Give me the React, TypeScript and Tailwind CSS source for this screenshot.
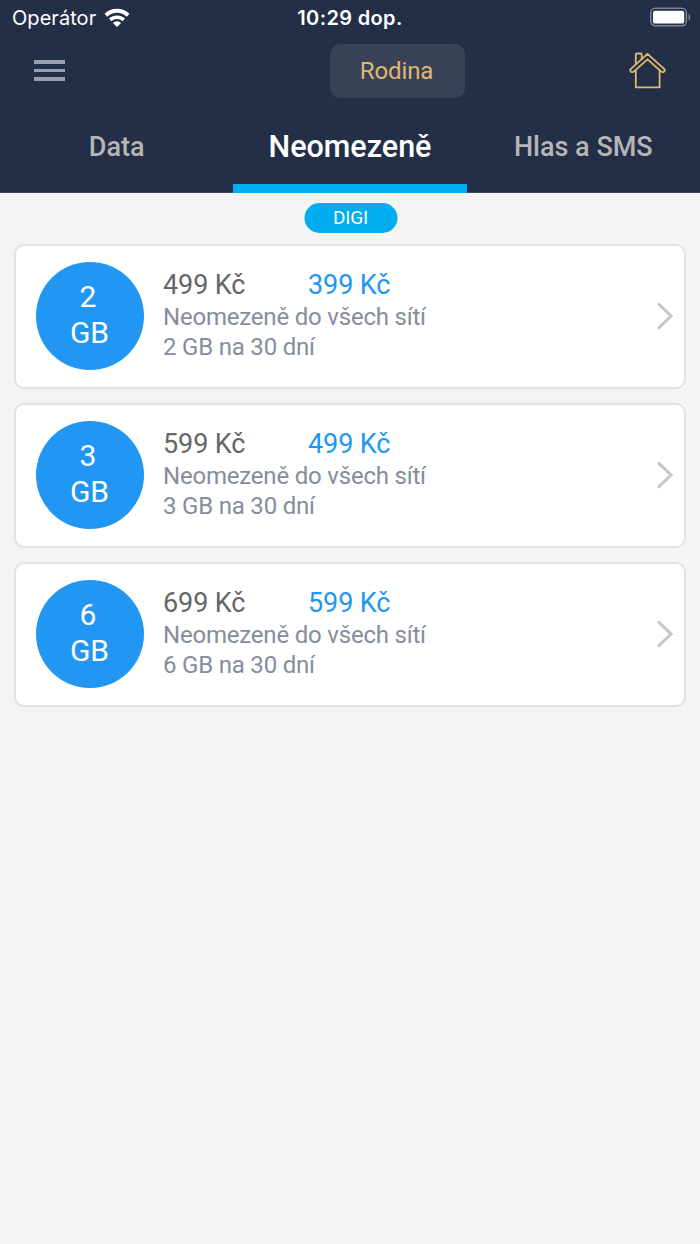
const plans = [
  { size: '2', oldPrice: '499 Kč', price: '399 Kč' },
  { size: '3', oldPrice: '599 Kč', price: '499 Kč' },
  { size: '6', oldPrice: '699 Kč', price: '599 Kč' },
];

function WifiIcon() {
  return (
    <svg className="ml-[8px] h-[20px] w-[26px] -translate-y-px" viewBox="0 0 26 20" fill="none" stroke="#fff" strokeWidth="4">
      <path d="M1.9 8.2a16.2 16.2 0 0 1 22.2 0" />
      <path d="M6.2 12.9a10 10 0 0 1 13.6 0" strokeWidth="3.5" />
      <path d="M13 20l-4.1-4a5.8 5.8 0 0 1 8.2 0z" fill="#fff" stroke="none" />
    </svg>
  );
}

function StatusBar() {
  return (
    <div className="grid h-9 grid-cols-3 items-center font-['Inter',sans-serif] text-[20px] leading-9 text-white">
      <div className="flex items-center pl-3">
        <span className="tracking-[0.05px]">Operátor</span>
        <WifiIcon />
      </div>
      <div className="text-center font-semibold tracking-[0.35px]">10:29 dop.</div>
      <div className="flex justify-end pr-2">
        <svg className="h-5 w-[42px] -translate-y-px" viewBox="0 0 42 20" fill="none">
          <rect x="0.8" y="1.2" width="35.6" height="17.6" rx="4.5" stroke="#7c8493" strokeWidth="1.5" />
          <rect x="3" y="3.8" width="31.2" height="12.8" rx="2.2" fill="#fff" />
          <path d="M38.5 7v6.4c2.4-.8 2.4-5.6 0-6.4z" fill="#7c8493" />
        </svg>
      </div>
    </div>
  );
}

function HouseIcon() {
  return (
    <svg className="h-[38px] w-[38px]" viewBox="0 0 38 38" fill="none" stroke="#e0b86f" strokeWidth="1.8" strokeLinejoin="round" strokeLinecap="round">
      <path d="M19.5 2.8 36.1 17.8q1.5 1.7-.2 2.9-1.5 1-2.9-.3L19.5 8.3 6 20.4q-1.4 1.3-2.9.3-1.7-1.2-.2-2.9z" />
      <path d="M7.8 13.2V3.7q0-1.2 1.2-1.2h3.5q1.2 0 1.2 1.2V8" />
      <path d="M7.8 19.5v16.8h23.8V19.5" />
    </svg>
  );
}

function PlanCard({ plan }: { plan: (typeof plans)[number] }) {
  return (
    <li className="flex h-[145px] items-center rounded-[10px] border-2 border-[#e2e2e3] bg-white pb-[2px] pl-5 pr-[11px]">
      <div className="flex size-[108px] shrink-0 flex-col items-center justify-center rounded-full bg-[#2196f3] pb-[2px] text-[30px] leading-9 text-white">
        <span className="pr-1">{plan.size}</span>
        <span className="pr-px">GB</span>
      </div>
      <div className="ml-[19px] grow pb-px text-[24px] leading-[30px] tracking-[-0.2px] text-[#858d9d]">
        <div className="flex h-[33px] text-[27px] leading-[32px] tracking-[-0.1px]">
          <span className="w-[145px] text-[#666]">{plan.oldPrice}</span>
          <span className="text-[#2196f3]">{plan.price}</span>
        </div>
        <p>Neomezeně do všech sítí</p>
        <p>{plan.size} GB na 30 dní</p>
      </div>
      <svg className="h-7 w-4" viewBox="0 0 16 28" fill="none" stroke="#c7c7c7" strokeWidth="3">
        <path d="M2 2.4 14 14 2 25.6" strokeLinecap="round" />
      </svg>
    </li>
  );
}

export default function App() {
  return (
    <div className="min-h-[1244px] w-full bg-[#f4f4f4] font-['Roboto',sans-serif]">
      <header className="h-[193px] bg-[#222f46]">
        <StatusBar />
        <div className="flex h-[70px] items-center pl-[34px] pr-[34px]">
          <button aria-label="Menu" className="flex w-[31px] flex-col gap-[5px] pb-px">
            <span className="h-[4px] bg-[#9a9fad]" />
            <span className="h-[3px] bg-[#9a9fad]" />
            <span className="h-[4px] bg-[#9a9fad]" />
          </button>
          <button className="ml-[265px] h-[54px] w-[135px] rounded-[10px] bg-[#374158] pr-[2px] text-[24px] tracking-[-0.1px] text-[#e0b86f]">Rodina</button>
          <button aria-label="Domů" className="ml-auto pb-[2px]">
            <HouseIcon />
          </button>
        </div>
        <nav className="grid h-[87px] grid-cols-3 border-b border-[#3b465b] text-center text-[27px] font-medium leading-[82px] text-[#b6b6b6]">
          <a>Data</a>
          <a className="h-[87px] border-b-[9px] border-[#00aeef] text-[30.5px] text-white">Neomezeně</a>
          <a>Hlas a SMS</a>
        </nav>
      </header>
      <main className="px-3.5 pt-2.5">
        <div className="mx-auto h-[30px] w-[93px] translate-x-[0.5px] rounded-full bg-[#00aeef] text-center text-[19px] leading-[29px] tracking-[-0.2px] text-white">DIGI</div>
        <ul className="mt-[11px] flex flex-col gap-3.5">
          {plans.map((plan) => (
            <PlanCard key={plan.size} plan={plan} />
          ))}
        </ul>
      </main>
    </div>
  );
}
